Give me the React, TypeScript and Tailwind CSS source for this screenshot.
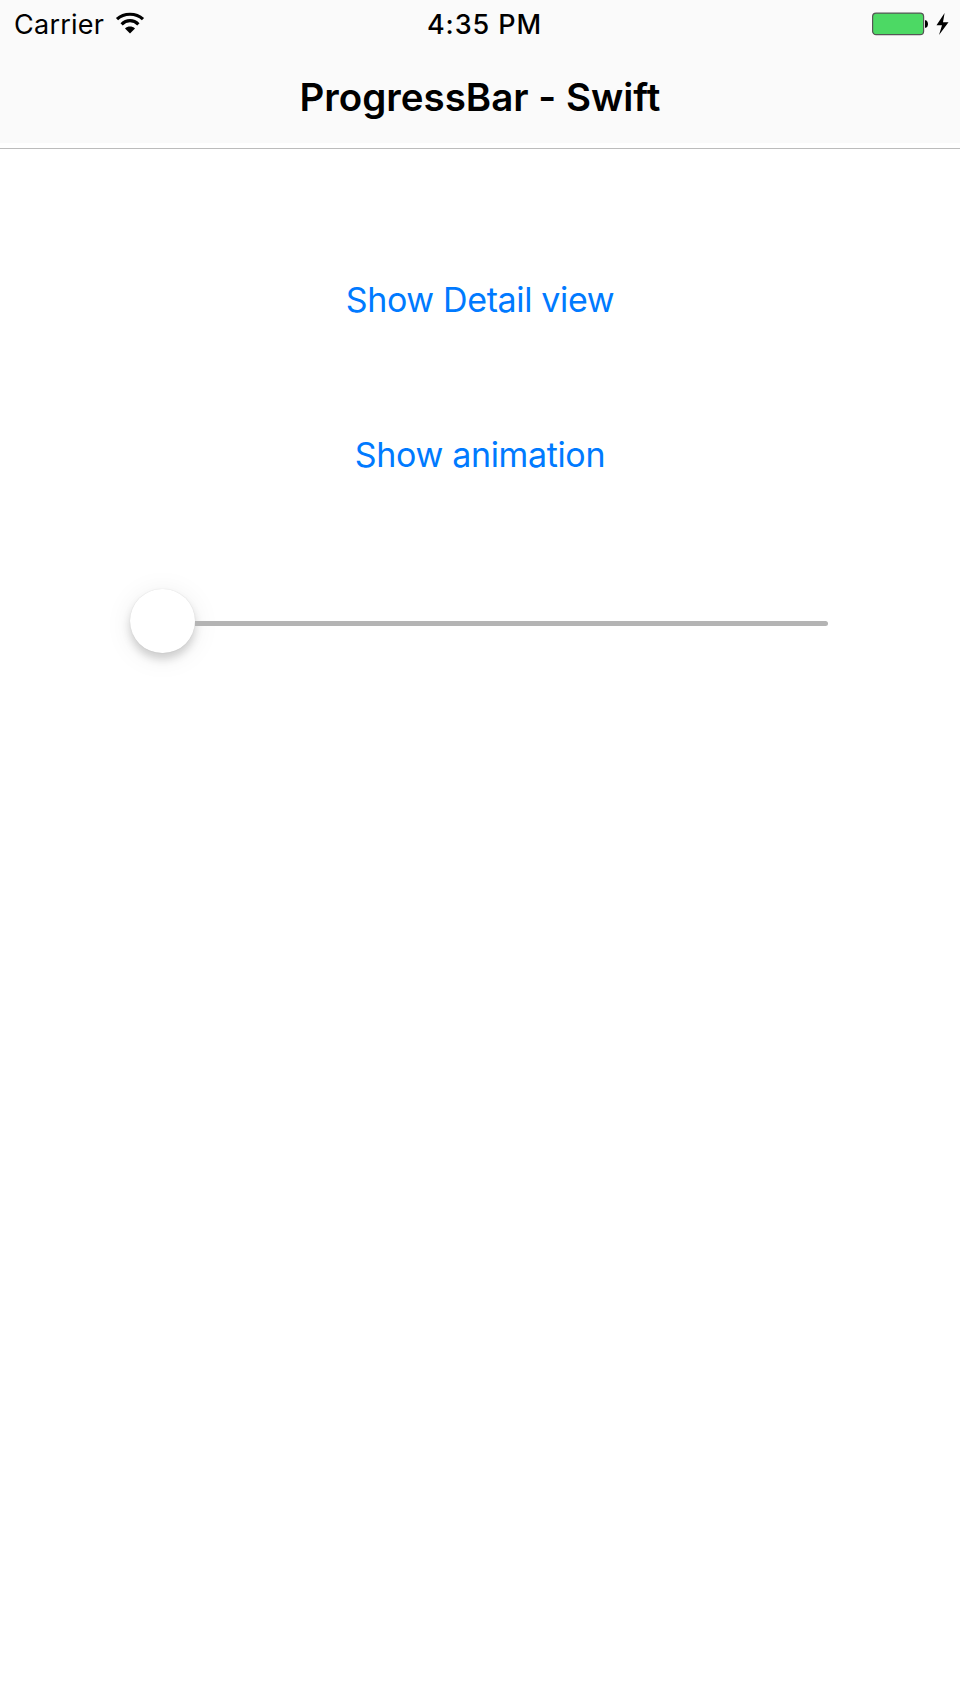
export default function App() {
  return (
    <div className="flex h-[1706px] w-[960px] flex-col overflow-hidden bg-white font-['Inter','Liberation_Sans',sans-serif] text-black">
      <header className="flex h-[149px] flex-col border-b border-[#bcbcbc] pb-[5px]">
        <div className="h-[143px] bg-[#fafafa]">
          <div className="grid h-12 grid-cols-[1fr_auto_1fr] items-center pl-[14px] pr-[11px]">
            <div className="flex items-center gap-[11px]">
              <span className="pt-0.5 text-[27px] leading-[46px] tracking-[0.25px]">Carrier</span>
              <svg className="mb-[3px] h-[22px] w-[30px]" viewBox="0 0 30 22" fill="none">
                <path d="M2 7.2C9 0.6 21 0.6 28 7.2" stroke="black" strokeWidth="3.2" />
                <path d="M6.6 12.3C11.5 7.5 18.5 7.5 23.4 12.3" stroke="black" strokeWidth="3.2" />
                <path d="M10 16.4C12.8 13.8 17.2 13.8 20 16.4L15 21.6Z" fill="black" />
              </svg>
            </div>
            <span className="pl-1.5 pt-0.5 text-[27px] font-medium leading-[46px] tracking-[0.9px]">4:35 PM</span>
            <div className="flex items-center justify-end">
              <svg className="h-6 w-[78px]" viewBox="0 0 78 24">
                <rect x="1.6" y="1.1" width="51" height="21.6" rx="3.5" fill="#4cd964" stroke="#555" strokeWidth="1.2" />
                <path d="M54 8.2H54.8C57.7 9.2 57.7 14.8 54.8 15.8H54Z" fill="black" />
                <path d="M73.6 1L65.5 13.2H71L68 23L77.5 10.2H72Z" fill="black" />
              </svg>
            </div>
          </div>
          <h1 className="text-center text-[38.5px] font-semibold leading-[98px] [font-feature-settings:'calt'_0]">ProgressBar - Swift</h1>
        </div>
      </header>
      <main className="flex flex-col items-center">
        <button className="mt-[123px] h-14 text-[34px] leading-14 tracking-[-0.35px] text-[#007aff]">Show Detail view</button>
        <button className="mt-[99px] h-14 text-[34px] leading-14 tracking-[-0.35px] text-[#007aff]">Show animation</button>
        <div className="mr-0.5 mt-[105px] flex h-[66px] w-[698px] items-center">
          <div className="mb-px h-[64px] w-[65px] shrink-0 rounded-full bg-white shadow-[0_6px_8px_rgba(0,0,0,0.16),0_4px_28px_rgba(0,0,0,0.08),0_0_1px_rgba(0,0,0,0.15)]" />
          <div className="mt-1 h-[5px] grow rounded-r-full bg-[#b4b4b4]" />
        </div>
      </main>
    </div>
  );
}
